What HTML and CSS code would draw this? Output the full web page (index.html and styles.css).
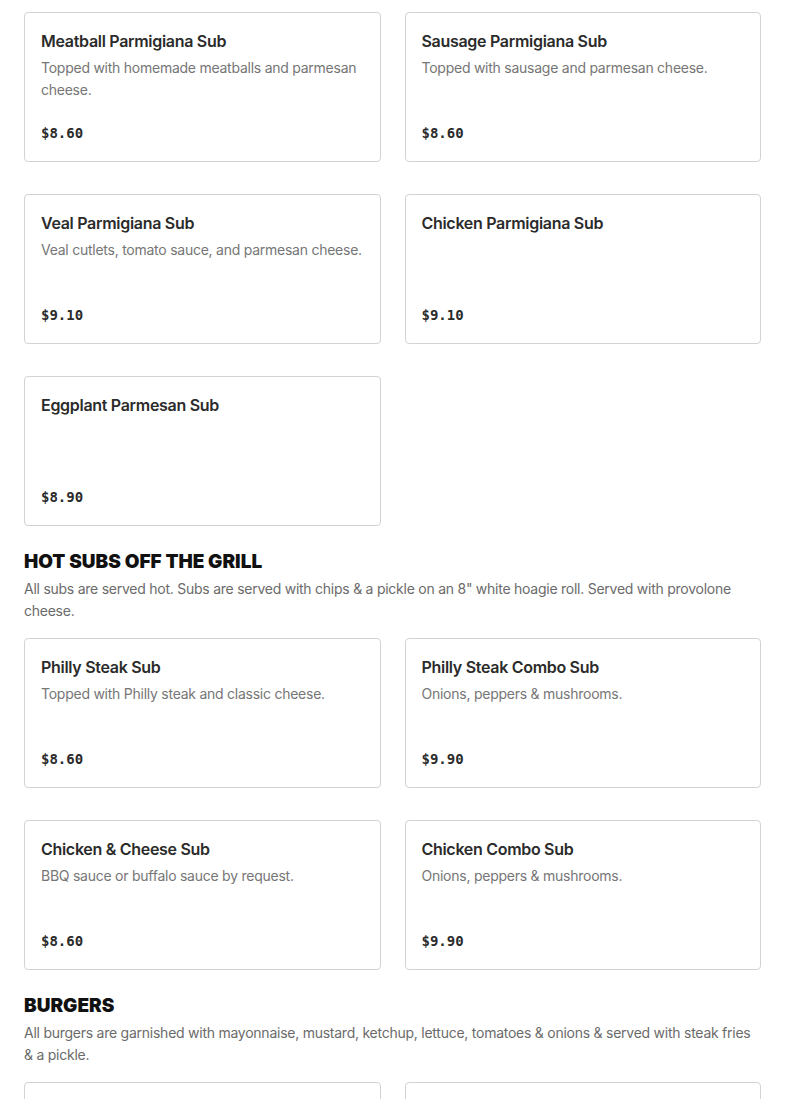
FILE: index.html
```html
<!DOCTYPE html>
<html>
<head>
<meta charset="utf-8">
<link rel="stylesheet" href="styles.css">
</head>
<body>
<main class="menu">
  <section class="section first">
    <div class="grid">
      <div class="card"><h3 class="title">Meatball Parmigiana Sub</h3><p class="desc">Topped with homemade meatballs and parmesan cheese.</p><div class="price">$8.60</div></div>
      <div class="card"><h3 class="title">Sausage Parmigiana Sub</h3><p class="desc">Topped with sausage and parmesan cheese.</p><div class="price">$8.60</div></div>
      <div class="card"><h3 class="title">Veal Parmigiana Sub</h3><p class="desc">Veal cutlets, tomato sauce, and parmesan cheese.</p><div class="price">$9.10</div></div>
      <div class="card"><h3 class="title">Chicken Parmigiana Sub</h3><div class="price">$9.10</div></div>
      <div class="card"><h3 class="title">Eggplant Parmesan Sub</h3><div class="price">$8.90</div></div>
    </div>
  </section>
  <section class="section">
    <h2 class="heading">HOT SUBS OFF THE GRILL</h2>
    <p class="intro">All subs are served hot. Subs are served with chips &amp; a pickle on an 8" white hoagie roll. Served with provolone cheese.</p>
    <div class="grid">
      <div class="card"><h3 class="title">Philly Steak Sub</h3><p class="desc">Topped with Philly steak and classic cheese.</p><div class="price">$8.60</div></div>
      <div class="card"><h3 class="title">Philly Steak Combo Sub</h3><p class="desc">Onions, peppers &amp; mushrooms.</p><div class="price">$9.90</div></div>
      <div class="card"><h3 class="title">Chicken &amp; Cheese Sub</h3><p class="desc">BBQ sauce or buffalo sauce by request.</p><div class="price">$8.60</div></div>
      <div class="card"><h3 class="title">Chicken Combo Sub</h3><p class="desc">Onions, peppers &amp; mushrooms.</p><div class="price">$9.90</div></div>
    </div>
  </section>
  <section class="section">
    <h2 class="heading">BURGERS</h2>
    <p class="intro">All burgers are garnished with mayonnaise, mustard, ketchup, lettuce, tomatoes &amp; onions &amp; served with steak fries &amp; a pickle.</p>
    <div class="grid">
      <div class="card"><h3 class="title">&nbsp;</h3><div class="price">&nbsp;</div></div>
      <div class="card"><h3 class="title">&nbsp;</h3><div class="price">&nbsp;</div></div>
    </div>
  </section>
</main>
</body>
</html>
```
FILE: styles.css
```css
* { box-sizing: border-box; }
html, body { margin: 0; padding: 0; background: #fff; }
body { font-family: "Inter", "Liberation Sans", sans-serif; color: #2b2b2b; overflow: hidden; }
.menu { padding: 12px 24px 0; }
.section { margin-top: 24px; }
.section.first { margin-top: 0; }
.heading {
  margin: 0;
  font-family: "Inter", sans-serif;
  font-weight: 900;
  font-size: 19px;
  line-height: 24px;
  color: #111;
}
.intro {
  margin: 4px 0 16px;
  font-size: 14px;
  line-height: 22px;
  letter-spacing: -0.25px;
  color: #6b6b6b;
}
.grid {
  display: grid;
  grid-template-columns: 1fr 1fr;
  column-gap: 24px;
  row-gap: 32px;
}
.card {
  border: 1px solid #d3d3d3;
  border-radius: 4px;
  padding: 16px;
  min-height: 150px;
  display: flex;
  flex-direction: column;
}
.title {
  margin: 0;
  font-size: 16px;
  line-height: 24px;
  font-weight: 600;
  letter-spacing: -0.3px;
  color: #2b2b2b;
}
.desc {
  margin: 4px 0 0;
  font-size: 14px;
  line-height: 22px;
  letter-spacing: -0.25px;
  color: #767676;
}
.price {
  margin-top: auto;
  padding-top: 1px;
  font-family: "DejaVu Sans Mono", monospace;
  font-weight: 700;
  font-size: 14px;
  line-height: 23px;
  color: #2b2b2b;
}
```
